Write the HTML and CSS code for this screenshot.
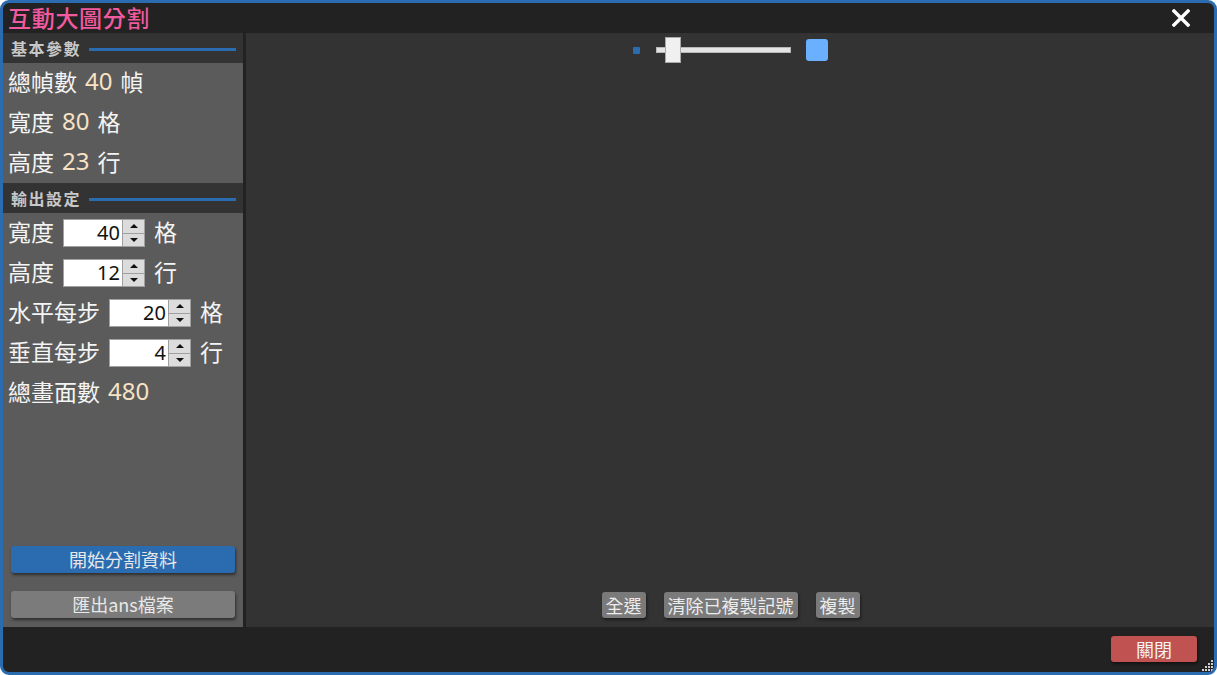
FILE: index.html
```html
<!DOCTYPE html>
<html lang="zh-Hant">
<head>
<meta charset="utf-8">
<title>互動大圖分割</title>
<link rel="stylesheet" href="styles.css">
</head>
<body>
<div class="window">
  <div class="titlebar">
    <span class="title">互動大圖分割</span>
    <svg class="close-x" width="18" height="18" viewBox="0 0 18 18"><path d="M2 2 L16 16 M16 2 L2 16" stroke="#fff" stroke-width="3.4" stroke-linecap="square"/></svg>
  </div>
  <div class="content">
    <div class="sidebar">
      <div class="sec-head"><span>基本參數</span><i class="sec-line"></i></div>
      <div class="panel panel-info">
        <div class="row">總幀數 <b class="num">40</b> 幀</div>
        <div class="row">寬度 <b class="num">80</b> 格</div>
        <div class="row">高度 <b class="num">23</b> 行</div>
      </div>
      <div class="sec-head"><span>輸出設定</span><i class="sec-line"></i></div>
      <div class="panel panel-out">
        <div class="row">寬度<span class="spin"><span class="inp">40</span><span class="arrows"><i class="up"></i><i class="dn"></i></span></span>格</div>
        <div class="row">高度<span class="spin"><span class="inp">12</span><span class="arrows"><i class="up"></i><i class="dn"></i></span></span>行</div>
        <div class="row">水平每步<span class="spin"><span class="inp">20</span><span class="arrows"><i class="up"></i><i class="dn"></i></span></span>格</div>
        <div class="row">垂直每步<span class="spin"><span class="inp">4</span><span class="arrows"><i class="up"></i><i class="dn"></i></span></span>行</div>
        <div class="row">總畫面數 <b class="num">480</b></div>
        <div class="side-btns">
          <div class="btn btn-blue">開始分割資料</div>
          <div class="btn btn-grey">匯出ans檔案</div>
        </div>
      </div>
    </div>
    <div class="main">
      <div class="zoombar">
        <i class="sq-small"></i>
        <span class="track"><i class="thumb"></i></span>
        <i class="sq-big"></i>
      </div>
      <div class="main-btns">
        <div class="mbtn">全選</div>
        <div class="mbtn">清除已複製記號</div>
        <div class="mbtn">複製</div>
      </div>
    </div>
  </div>
  <div class="footer">
    <div class="close-btn">關閉</div>
    <svg class="grip" width="14" height="14" viewBox="0 0 14 14" fill="#cfcfcf">
      <rect x="11" y="2" width="2" height="2"/>
      <rect x="8" y="5" width="2" height="2"/><rect x="11" y="5" width="2" height="2"/>
      <rect x="5" y="8" width="2" height="2"/><rect x="8" y="8" width="2" height="2"/><rect x="11" y="8" width="2" height="2"/>
      <rect x="2" y="11" width="2" height="2"/><rect x="5" y="11" width="2" height="2"/><rect x="8" y="11" width="2" height="2"/><rect x="11" y="11" width="2" height="2"/>
    </svg>
  </div>
</div>
</body>
</html>
```
FILE: styles.css
```css
html, body {
  margin: 0;
  padding: 0;
  background: #ffffff;
}
body {
  font-family: "Noto Sans", "Noto Sans CJK TC", sans-serif;
}
.window {
  width: 1217px;
  height: 675px;
  box-sizing: border-box;
  border: 3px solid #2b6cb0;
  border-radius: 9px;
  background: #222222;
  display: flex;
  flex-direction: column;
  overflow: hidden;
}
.titlebar {
  height: 30px;
  flex: none;
  display: flex;
  align-items: center;
  justify-content: space-between;
  padding: 0 24px 0 5px;
}
.title {
  color: #f25a9f;
  font-family: "Noto Sans CJK TC", sans-serif;
  font-size: 23px;
  font-weight: 500;
  line-height: 30px;
  letter-spacing: 0.7px;
  margin-top: -3px;
}
.close-x {
  display: block;
}
.content {
  flex: 1;
  display: flex;
  gap: 3px;
  min-height: 0;
}
.sidebar {
  width: 240px;
  flex: none;
  display: flex;
  flex-direction: column;
}
.sec-head {
  height: 29px;
  flex: none;
  background: #333333;
  display: flex;
  align-items: center;
  padding: 1px 7px 0 8px;
  gap: 8px;
}
.sec-head span {
  color: #c8c8c8;
  font-family: "Noto Sans CJK TC", sans-serif;
  font-weight: 700;
  font-size: 16px;
  letter-spacing: 1.5px;
  margin-top: -1px;
}
.sec-line {
  flex: 1;
  height: 3px;
  background: #2b6cb0;
  margin-top: 2px;
}
.panel {
  background: #5b5b5b;
}
.panel-info {
  height: 120px;
  flex: none;
}
.panel-out {
  flex: 1;
  display: flex;
  flex-direction: column;
}
.row {
  height: 40px;
  box-sizing: border-box;
  padding-bottom: 5px;
  display: flex;
  align-items: center;
  padding-left: 5px;
  color: #f4f4f4;
  font-size: 23px;
  font-family: "Noto Sans", "Noto Sans CJK TC", sans-serif;
  white-space: pre;
}
.num {
  font-weight: 400;
  font-size: 24px;
  color: #f7e2c3;
  margin: 0 2px;
}
.spin {
  display: flex;
  height: 28px;
  margin: 5px 9px 0 9px;
}
.inp {
  width: 56px;
  height: 26px;
  border: 1px solid #a0a0a0;
  background: #ffffff;
  color: #111;
  font-size: 20px;
  line-height: 26px;
  text-align: right;
  padding-right: 2px;
  box-sizing: content-box;
}
.arrows {
  width: 21px;
  display: flex;
  flex-direction: column;
  border: 1px solid #a0a0a0;
  border-left: none;
  background: #dcdcdc;
}
.arrows i {
  flex: 1;
  position: relative;
}
.arrows i.up {
  border-bottom: 1px solid #a0a0a0;
}
.arrows i::after {
  content: "";
  position: absolute;
  left: 7px;
  top: 4px;
  border-left: 4px solid transparent;
  border-right: 4px solid transparent;
}
.arrows i.up::after {
  border-bottom: 4px solid #111;
}
.arrows i.dn::after {
  border-top: 4px solid #111;
}
.side-btns {
  margin-top: auto;
  padding: 0 8px 9px 8px;
  display: flex;
  flex-direction: column;
  gap: 18px;
}
.btn {
  height: 27px;
  border-radius: 3px;
  display: flex;
  align-items: center;
  justify-content: center;
  color: #e8e8e8;
  font-family: "Noto Sans CJK TC", sans-serif;
  font-size: 18px;
  line-height: 27px;
  box-shadow: 1px 2px 3px rgba(0,0,0,0.5);
}
.btn-blue {
  background: #2b6cb0;
}
.btn-grey {
  background: #7b7b7b;
}
.main {
  flex: 1;
  background: #333333;
  display: flex;
  flex-direction: column;
  align-items: center;
}
.zoombar {
  display: flex;
  align-items: center;
  height: 26px;
  margin-top: 4px;
  margin-left: 1px;
}
.sq-small {
  width: 7px;
  height: 7px;
  background: #2b6cb0;
  border-radius: 1px;
}
.track {
  width: 133px;
  height: 4px;
  margin: 0 15px 0 16px;
  background: #e4e4e4;
  border: 1px solid #b8b8b8;
  position: relative;
}
.thumb {
  position: absolute;
  left: 8px;
  top: -11px;
  width: 14px;
  height: 24px;
  background: #f0f0f0;
  border: 1px solid #a9a9a9;
}
.sq-big {
  width: 22px;
  height: 22px;
  background: #6ab0ff;
  border-radius: 3px;
}
.main-btns {
  margin-top: auto;
  margin-bottom: 9px;
  display: flex;
  gap: 18px;
  margin-left: 1px;
}
.mbtn {
  height: 26px;
  padding: 0 4px;
  background: #7a7a7a;
  border-radius: 3px;
  color: #ececec;
  font-family: "Noto Sans CJK TC", sans-serif;
  font-size: 18px;
  line-height: 26px;
  box-shadow: 1px 2px 3px rgba(0,0,0,0.45);
}
.footer {
  height: 45px;
  flex: none;
  display: flex;
  justify-content: flex-end;
  align-items: flex-start;
  position: relative;
}
.close-btn {
  margin: 9px 17px 0 0;
  width: 86px;
  height: 26px;
  border-radius: 3px;
  background: #c05252;
  color: #f2f2f2;
  font-family: "Noto Sans CJK TC", sans-serif;
  font-size: 18px;
  line-height: 26px;
  text-align: center;
  box-shadow: 1px 2px 3px rgba(0,0,0,0.45);
}
.grip {
  position: absolute;
  right: 0;
  bottom: 0;
}
```
